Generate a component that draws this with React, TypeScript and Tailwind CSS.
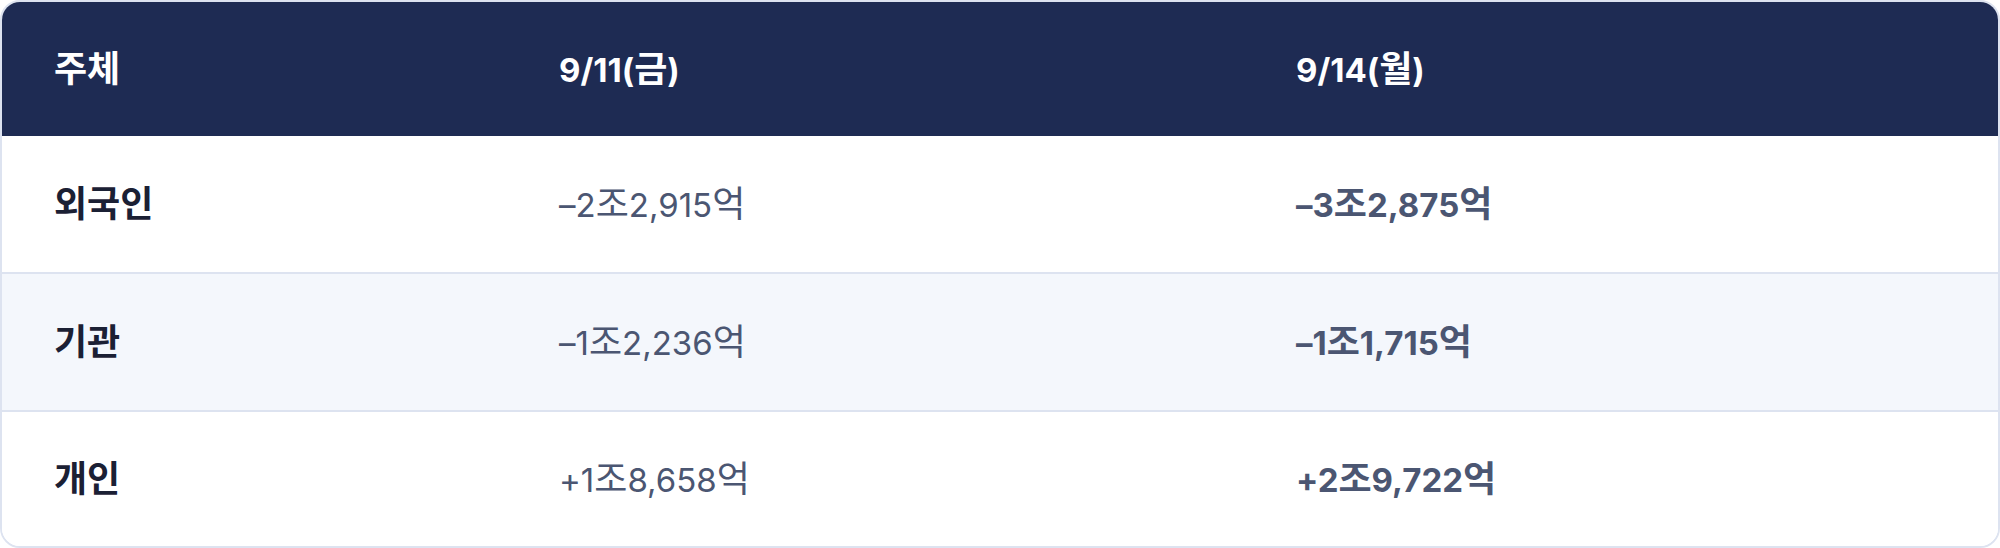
import React from "react";

interface Row {
  label: string;
  fri: string;
  mon: string;
}

const rows: Row[] = [
  { label: "외국인", fri: "–2조2,915억", mon: "–3조2,875억" },
  { label: "기관", fri: "–1조2,236억", mon: "–1조1,715억" },
  { label: "개인", fri: "+1조8,658억", mon: "+2조9,722억" },
];

const font = {
  fontFamily: 'Inter, "Noto Sans CJK KR", "Noto Sans", sans-serif',
};

// Hangul in the source font sits a touch larger than the Latin digits
const Mixed: React.FC<{ text: string }> = ({ text }) => {
  const parts = text.split(/([\uac00-\ud7a3]+)/).filter(Boolean);
  return (
    <>
      {parts.map((p, i) =>
        /[\uac00-\ud7a3]/.test(p) ? (
          <span key={i} className="text-[36px]">
            {p}
          </span>
        ) : (
          <span key={i}>{p}</span>
        )
      )}
    </>
  );
};

export default function App() {
  return (
    <div className="w-[2000px] h-[548px] bg-white" style={font}>
      <div className="h-full rounded-[20px] border-2 border-[#dde3f0] overflow-hidden flex flex-col">
        <div className="grid grid-cols-[505px_737px_1fr] h-[134px] bg-[#1e2b53] text-white text-[33px] leading-none font-bold items-center shrink-0">
          <div className="pl-[52px]">
            <Mixed text="주체" />
          </div>
          <div className="pl-[52px]">
            <Mixed text="9/11(금)" />
          </div>
          <div className="pl-[52px]">
            <Mixed text="9/14(월)" />
          </div>
        </div>

        {rows.map((row, i) => (
          <div
            key={row.label}
            className={
              "grid grid-cols-[505px_737px_1fr] items-center text-[33px] leading-none " +
              (i === 0 ? "h-[136px] bg-white" : "") +
              (i === 1 ? "h-[138px] border-t-2 border-[#dde3f0] bg-[#f4f7fc]" : "") +
              (i === 2 ? "h-[136px] border-t-2 border-[#dde3f0] bg-white" : "")
            }
          >
            <div className="pl-[52px] font-bold text-[#1b2034]">
              <Mixed text={row.label} />
            </div>
            <div className="pl-[52px] font-normal text-[#4b5672]">
              <Mixed text={row.fri} />
            </div>
            <div className="pl-[52px] font-bold text-[#4b5672]">
              <Mixed text={row.mon} />
            </div>
          </div>
        ))}
      </div>
    </div>
  );
}
